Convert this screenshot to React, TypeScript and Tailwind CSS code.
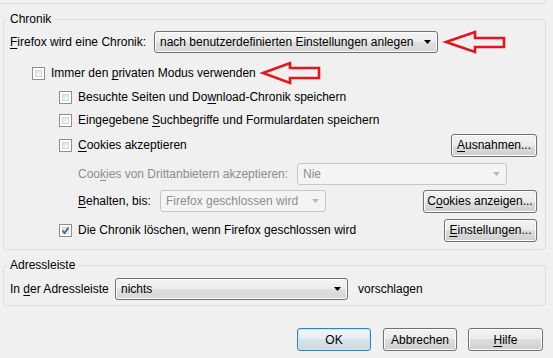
import type { ReactNode } from "react";

function Mn({ children }: { children: ReactNode }) {
  return <span className="underline decoration-1 underline-offset-[2px]">{children}</span>;
}

function Checkbox({ checked = false }: { checked?: boolean }) {
  return (
    <div className="relative w-[13px] h-[13px] shrink-0 border border-[#8e8f8f] bg-white p-[2px]">
      <div className="w-full h-full border border-[#d2d5d9] bg-[linear-gradient(135deg,#e0e2e5,#fafafa)]" />
      {checked && (
        <svg className="absolute left-[1px] top-[1px]" width="9" height="9" viewBox="0 0 9 9">
          <path d="M1.5 4.5 L3.6 7 L7.6 1.5" fill="none" stroke="#4a5f97" strokeWidth="1.8" />
        </svg>
      )}
    </div>
  );
}

function Select({
  value,
  className,
  disabled = false,
}: {
  value: string;
  className: string;
  disabled?: boolean;
}) {
  return (
    <div
      className={
        "flex items-center h-[22px] rounded-[3px] border shrink-0 " +
        (disabled
          ? "border-[#c4c7ca] bg-[#f4f4f4] text-[#8d8d8d] "
          : "border-[#707070] bg-[linear-gradient(#f4f4f4,#ececec_50%,#e0e0e0_50%,#d6d6d6)] shadow-[inset_0_0_0_1px_#fbfbfb] ") +
        className
      }
    >
      <span className="flex-1 pl-[5px] whitespace-nowrap">{value}</span>
      <svg className="mr-[6px]" width="7" height="4" viewBox="0 0 7 4">
        <path d="M0 0 H7 L3.5 4 Z" fill={disabled ? "#b8b8b8" : "#000"} />
      </svg>
    </div>
  );
}

function Btn({
  children,
  className,
  primary = false,
}: {
  children: ReactNode;
  className: string;
  primary?: boolean;
}) {
  return (
    <div
      className={
        "flex items-center justify-center h-[23px] rounded-[3px] border whitespace-nowrap shrink-0 " +
        (primary
          ? "border-[#3c7fb1] bg-[linear-gradient(#eef5fa,#e4edf3_50%,#d8e3eb_50%,#ccd8e1)] shadow-[inset_0_0_0_1px_#c5e4f7] "
          : "border-[#707070] bg-[linear-gradient(#f2f2f2,#ebebeb_50%,#dddddd_50%,#cfcfcf)] shadow-[inset_0_0_0_1px_#fcfcfc] ") +
        className
      }
    >
      {children}
    </div>
  );
}

export default function App() {
  return (
    <div className="relative w-[553px] h-[358px] overflow-hidden bg-[#f0f0f0] text-[12px] leading-[16px] text-black font-['Liberation_Sans',Arial,sans-serif]">
      {/* rest of the previous group box */}
      <div className="w-[546px] h-[4px] border-b border-r border-[#d5dfe5] rounded-br-[3px]" />

      <fieldset className="ml-[3px] mt-[7px] w-[543px] border border-[#d5dfe5] rounded-[3px] pb-[7px] pr-[8px]">
        <legend className="ml-[3px] px-[3px] leading-[16px]">Chronik</legend>

        <div className="flex items-center h-[22px] mt-[4px] pl-[6px]">
          <span className="w-[144px] whitespace-nowrap">
            <Mn>F</Mn>irefox wird eine Chronik:
          </span>
          <Select value="nach benutzerdefinierten Einstellungen anlegen" className="w-[284px]" />
        </div>

        <div className="flex items-center h-[22px] mt-[9px] pl-[28px] gap-[6px]">
          <Checkbox />
          <span>
            Immer den <Mn>p</Mn>rivaten Modus verwenden
          </span>
        </div>

        <div className="flex items-center h-[22px] mt-[2px] pl-[55px] gap-[6px]">
          <Checkbox />
          <span>
            Besuchte Seiten und Do<Mn>w</Mn>nload-Chronik speichern
          </span>
        </div>

        <div className="flex items-center h-[22px] mt-[1px] pl-[55px] gap-[6px]">
          <Checkbox />
          <span>
            Eingegebene <Mn>S</Mn>uchbegriffe und Formulardaten speichern
          </span>
        </div>

        <div className="flex items-center h-[24px] mt-[2px] pl-[55px] gap-[6px]">
          <Checkbox />
          <span className="flex-1">
            <Mn>C</Mn>ookies akzeptieren
          </span>
          <Btn className="w-[86px]">
            <span>
              <Mn>A</Mn>usnahmen...
            </span>
          </Btn>
        </div>

        <div className="flex items-center h-[22px] mt-[6px] pl-[74px] text-[#8d8d8d]">
          <span className="w-[219px] whitespace-nowrap">
            Coo<Mn>k</Mn>ies von Drittanbietern akzeptieren:
          </span>
          <Select value="Nie" className="w-[210px]" disabled />
        </div>

        <div className="flex items-center h-[24px] mt-[4px] pl-[74px]">
          <span className="w-[82px] whitespace-nowrap">
            <Mn>B</Mn>ehalten, bis:
          </span>
          <Select value="Firefox geschlossen wird" className="w-[166px]" disabled />
          <div className="flex-1" />
          <Btn className="w-[114px]">
            <span>
              C<Mn>o</Mn>okies anzeigen...
            </span>
          </Btn>
        </div>

        <div className="flex items-center h-[24px] mt-[5px] pl-[55px] gap-[6px]">
          <Checkbox checked />
          <span className="flex-1">Die Chronik löschen, wenn Firefox geschlossen wird</span>
          <Btn className="w-[93px]">
            <span>
              <Mn>E</Mn>instellungen...
            </span>
          </Btn>
        </div>
      </fieldset>

      <fieldset className="ml-[3px] mt-[7px] w-[543px] border border-[#d5dfe5] rounded-[3px] pb-[5px]">
        <legend className="ml-[3px] px-[3px] leading-[16px]">Adressleiste</legend>
        <div className="flex items-center h-[22px] mt-[5px] pl-[6px]">
          <span className="w-[105px] whitespace-nowrap">
            In <Mn>d</Mn>er Adressleiste
          </span>
          <Select value="nichts" className="w-[233px]" />
          <span className="ml-[10px]">vorschlagen</span>
        </div>
      </fieldset>

      <div className="flex justify-end mt-[22px] pr-[10px]">
        <Btn primary className="w-[74px] mr-[12px]">
          OK
        </Btn>
        <Btn className="w-[74px] mr-[11px]">Abbrechen</Btn>
        <Btn className="w-[75px]">
          <span>
            <Mn>H</Mn>ilfe
          </span>
        </Btn>
      </div>

      {/* red annotation arrows */}
      <svg className="absolute inset-0 pointer-events-none" width="553" height="358">
        <polygon
          points="446,42 475,32 475,38 504,38 504,47 475,47 475,52"
          fill="none"
          stroke="#e3161d"
          strokeWidth="2.6"
          strokeLinejoin="miter"
        />
        <polygon
          points="263,73 290,63 290,68 319,68 319,78 290,78 290,83"
          fill="none"
          stroke="#e3161d"
          strokeWidth="2.6"
          strokeLinejoin="miter"
        />
      </svg>
    </div>
  );
}
